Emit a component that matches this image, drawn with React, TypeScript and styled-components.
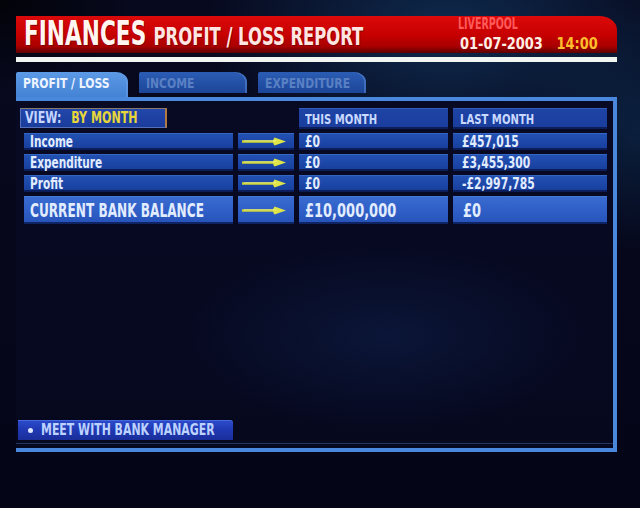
import styled, { createGlobalStyle } from "styled-components";

const FONT = `"Liberation Sans Narrow", "DejaVu Sans Condensed", "Liberation Sans", sans-serif`;

const GlobalStyle = createGlobalStyle`
  html, body {
    margin: 0;
    padding: 0;
  }
  body {
    background: #05061a;
    font-family: ${FONT};
  }
`;

interface Row {
  label: string;
  thisMonth: string;
  lastMonth: string;
}

const rows: Row[] = [
  { label: "Income", thisMonth: "£0", lastMonth: "£457,015" },
  { label: "Expenditure", thisMonth: "£0", lastMonth: "£3,455,300" },
  { label: "Profit", thisMonth: "£0", lastMonth: "-£2,997,785" },
];

const Arrow = () => (
  <svg width="47" height="11" viewBox="0 0 47 11">
    <line x1="2" y1="5.5" x2="38" y2="5.5" stroke="#ccd43a" strokeWidth="2.4" />
    <path d="M34.5 1.5 L46 5.5 L34.5 9.5 Q31.5 5.5 34.5 1.5 Z" fill="#dfe448" />
    <line x1="4" y1="4.8" x2="36" y2="4.8" stroke="#f2f59a" strokeWidth="0.7" />
  </svg>
);

const App = () => {
  return (
    <Screen>
      <GlobalStyle />
      <Header>
        <Title>
          <TitleMain>FINANCES</TitleMain>
          <TitleSub>PROFIT / LOSS REPORT</TitleSub>
        </Title>
        <Meta>
          <Fit $x={0.66}>
            <Club>LIVERPOOL</Club>
          </Fit>
          <DateRow>
            <Fit $x={0.9}>01-07-2003</Fit>
            <Fit $x={0.9} $right>
              <Clock>14:00</Clock>
            </Fit>
          </DateRow>
        </Meta>
      </Header>
      <Rule />

      <Tabs>
        <Tab $active>
          <Fit $x={0.86}>PROFIT / LOSS</Fit>
        </Tab>
        <Tab>
          <Fit $x={0.86}>INCOME</Fit>
        </Tab>
        <Tab>
          <Fit $x={0.86}>EXPENDITURE</Fit>
        </Tab>
      </Tabs>

      <Panel>
        <Grid>
          <ViewBox>
            <Fit $x={0.82}>
              VIEW:<ViewValue>BY MONTH</ViewValue>
            </Fit>
          </ViewBox>
          <span />
          <Cell $head>
            <Fit $x={0.8}>THIS MONTH</Fit>
          </Cell>
          <Cell $head $pad={7}>
            <Fit $x={0.8}>LAST MONTH</Fit>
          </Cell>

          {rows.map((r) => (
            <Line key={r.label}>
              <Cell $inset>
                <Fit $x={0.78}>{r.label}</Fit>
              </Cell>
              <Cell $pad={2}>
                <Arrow />
              </Cell>
              <Cell>
                <Fit $x={0.8}>{r.thisMonth}</Fit>
              </Cell>
              <Cell $pad={9}>
                <Fit $x={0.8}>{r.lastMonth}</Fit>
              </Cell>
            </Line>
          ))}

          <Cell $big $inset>
            <Fit $x={0.71}>CURRENT BANK BALANCE</Fit>
          </Cell>
          <Cell $big $pad={2}>
            <Arrow />
          </Cell>
          <Cell $big>
            <Fit $x={0.76}>£10,000,000</Fit>
          </Cell>
          <Cell $big $pad={10}>
            <Fit $x={0.76}>£0</Fit>
          </Cell>
        </Grid>

        <ManagerButton>
          <Bullet />
          <Fit $x={0.81}>MEET WITH BANK MANAGER</Fit>
        </ManagerButton>
      </Panel>
    </Screen>
  );
};

export default App;

const Screen = styled.div`
  width: 640px;
  height: 508px;
  box-sizing: border-box;
  padding: 16px 23px 0 16px;
  display: flex;
  flex-direction: column;
  overflow: hidden;
  background:
    radial-gradient(ellipse 55% 40% at 70% 6%, rgba(16, 48, 86, 0.85), rgba(10, 30, 60, 0) 70%),
    radial-gradient(ellipse 30% 35% at 100% 25%, rgba(12, 38, 70, 0.8), transparent 70%),
    radial-gradient(ellipse 30% 25% at 0% 0%, rgba(2, 2, 6, 0.9), transparent 70%),
    linear-gradient(180deg, #07091e 0%, #050518 100%);
`;

const Fit = styled.span<{ $x: number; $right?: boolean }>`
  display: inline-block;
  white-space: nowrap;
  transform: scaleX(${(p) => p.$x});
  transform-origin: ${(p) => (p.$right ? "right" : "left")} center;
`;

const Header = styled.header`
  height: 37px;
  flex: none;
  display: flex;
  align-items: flex-start;
  padding: 0 23px 0 8px;
  background: linear-gradient(
    180deg,
    #dc0a0a 0%,
    #c80000 50%,
    #aa0000 82%,
    #5c0000 100%
  );
  border-top-right-radius: 18px 14px;
`;

const Title = styled.div`
  flex: 1 1 0;
  min-width: 0;
  display: flex;
  align-items: baseline;
  padding-top: 1px;
  font-weight: 700;
  white-space: nowrap;
  transform: scaleX(0.73);
  transform-origin: left top;
`;

const TitleMain = styled.span`
  font-size: 33px;
  line-height: 33px;
  color: #fff6f2;
  text-shadow: 1px 1px 0 rgba(90, 0, 0, 0.6);
`;

const TitleSub = styled.span`
  font-size: 25px;
  line-height: 25px;
  margin-left: 10px;
  color: #ffe6e2;
  text-shadow: 1px 1px 0 rgba(90, 0, 0, 0.6);
`;

const Meta = styled.div`
  flex: none;
  width: 136px;
  display: flex;
  flex-direction: column;
  align-items: flex-start;
  font-weight: 700;
  font-size: 16px;
  line-height: 16px;
`;

const Club = styled.span`
  color: #ff5a5a;
`;

const DateRow = styled.div`
  width: 134px;
  display: flex;
  justify-content: space-between;
  margin: 4px 0 0 2px;
  color: #fff0e6;
`;

const Clock = styled.span`
  color: #ffbe2c;
`;

const Rule = styled.div`
  height: 5px;
  margin-top: 4px;
  flex: none;
  background: #f2f6f2;
`;

const Tabs = styled.div`
  height: 25px;
  margin-top: 10px;
  flex: none;
  display: flex;
  gap: 11px;
`;

const Tab = styled.div<{ $active?: boolean }>`
  width: ${(p) => (p.$active ? 112 : 108)}px;
  height: ${(p) => (p.$active ? 25 : 21)}px;
  box-sizing: border-box;
  padding: 4px 0 0 7px;
  font-size: 14px;
  line-height: 14px;
  font-weight: 700;
  color: ${(p) => (p.$active ? "#eef4ff" : "#5a80c4")};
  background: ${(p) =>
    p.$active
      ? "linear-gradient(180deg, #5c9ae6 0%, #4482d4 100%)"
      : "linear-gradient(180deg, #2b5cb4 0%, #1c4698 100%)"};
  border-top-left-radius: 2px;
  border-top-right-radius: 12px 10px;
  box-shadow: inset -2px 0 0 rgba(120, 170, 240, 0.35);
`;

const Panel = styled.section`
  height: 355px;
  flex: none;
  box-sizing: border-box;
  padding: 7px 5px 8px 4px;
  display: flex;
  flex-direction: column;
  border: 4px solid #4a88de;
  border-left: none;
  box-shadow: inset 0 -4px 0 #060820, inset 0 -5px 0 rgba(70, 110, 180, 0.45);
  background:
    radial-gradient(ellipse 45% 35% at 62% 68%, rgba(12, 26, 64, 0.75), transparent 75%),
    linear-gradient(180deg, #080a24 0%, #06081e 100%);
`;

const Grid = styled.div`
  display: grid;
  grid-template-columns: 213px 56px 149px 154px;
  grid-template-rows: 21px 17px 17px 17px 28px;
  column-gap: 5px;
  row-gap: 4px;
`;

/* one table row; its cells sit straight on the grid */
const Line = styled.div`
  display: contents;
`;

const ViewBox = styled.div`
  width: 147px;
  height: 20px;
  box-sizing: border-box;
  display: flex;
  align-items: center;
  padding-left: 4px;
  font-size: 15px;
  font-weight: 700;
  color: #c6d6ff;
  background: linear-gradient(180deg, #2246aa 0%, #1a3c9c 100%);
  border: 1px solid #5670b8;
  border-top-color: #8a7a6a;
  border-right: 2px solid #b07a40;
`;

const ViewValue = styled.span`
  margin-left: 12px;
  color: #e6d63a;
`;

const Cell = styled.div<{
  $big?: boolean;
  $head?: boolean;
  $inset?: boolean;
  $pad?: number;
}>`
  display: flex;
  align-items: center;
  min-width: 0;
  overflow: hidden;
  white-space: nowrap;
  margin-left: ${(p) => (p.$inset ? 4 : 0)}px;
  padding-left: ${(p) => p.$pad ?? 6}px;
  font-weight: 700;
  font-size: ${(p) => (p.$big ? 19 : p.$head ? 14 : 15)}px;
  color: ${(p) => (p.$head ? "#c8d8ff" : "#e2ecff")};
  background: ${(p) =>
    p.$big
      ? "linear-gradient(180deg, #3a6cd0 0%, #2e5ec6 55%, #2652b8 100%)"
      : p.$head
      ? "linear-gradient(180deg, #1e44a6 0%, #1a3d9c 100%)"
      : "linear-gradient(180deg, #2352b2 0%, #1c47a8 55%, #173d98 100%)"};
  box-shadow: inset 0 -2px 0 rgba(8, 20, 70, 0.75),
    inset 0 1px 0 rgba(100, 150, 235, 0.3);
`;

const ManagerButton = styled.button`
  margin-top: auto;
  margin-left: -2px;
  width: 215px;
  height: 20px;
  border: none;
  padding: 0 0 0 10px;
  display: flex;
  align-items: center;
  gap: 8px;
  font-family: ${FONT};
  font-size: 15px;
  font-weight: 700;
  color: #bcd2ff;
  cursor: pointer;
  background: linear-gradient(180deg, #2c4ccc 0%, #2038b2 50%, #1a2e9a 100%);
  border-top-right-radius: 3px;
  box-shadow: inset 0 1px 0 rgba(120, 160, 255, 0.35);
`;

const Bullet = styled.span`
  width: 5px;
  height: 5px;
  flex: none;
  border-radius: 50%;
  background: #dce6ff;
`;
